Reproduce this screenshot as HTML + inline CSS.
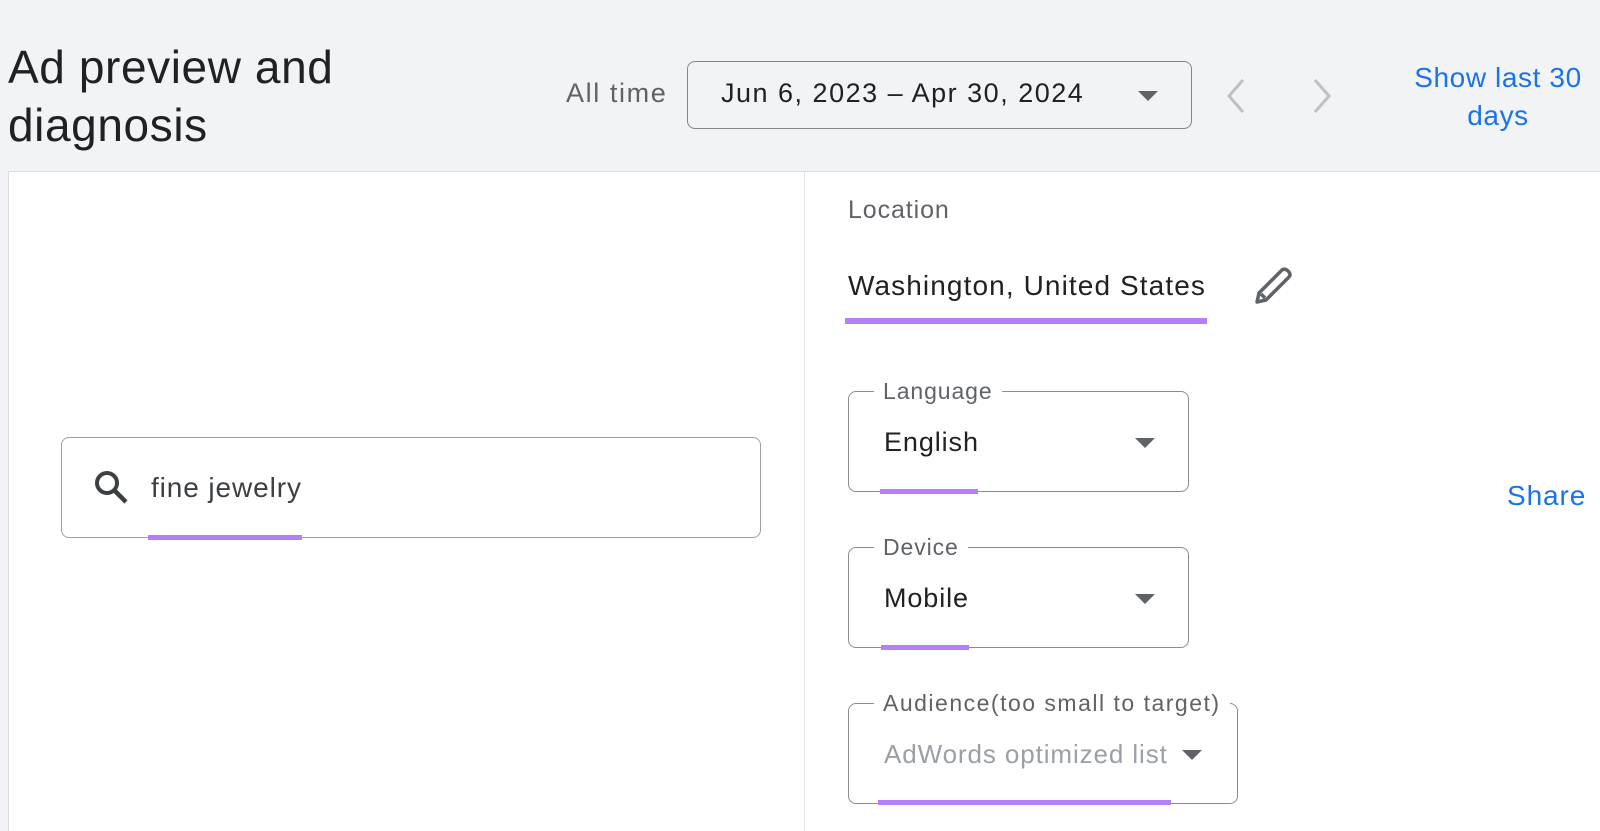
<!DOCTYPE html>
<html><head><meta charset="utf-8"><style>
*{margin:0;padding:0;box-sizing:border-box}
body{width:1600px;height:816px;background:#f1f3f4;font-family:"Liberation Sans",sans-serif;position:relative;overflow:hidden}
.a{position:absolute;white-space:nowrap;letter-spacing:0.9px}
.panel{position:absolute;left:8px;top:171px;width:1600px;height:660px;background:#fff;border-top:1px solid #dadce0;border-left:1px solid #dadce0}
.vdiv{position:absolute;left:804px;top:171px;width:1px;height:660px;background:#e3e3e3}
.box{position:absolute;border:1.5px solid #8a8d91;border-radius:8px}
.ul{position:absolute;height:5px;background:#b57ff7}
.lbl{position:absolute;background:#fff;padding:0 9px;font-size:23px;color:#5f6368;line-height:26px;letter-spacing:0.9px}
.caret{position:absolute;width:0;height:0;border-left:10px solid transparent;border-right:10px solid transparent;border-top:10px solid #5f6368}
</style></head><body>
<div class="a" style="left:8px;top:38px;font-size:46px;line-height:58px;color:#202124;letter-spacing:0.6px">Ad preview and<br>diagnosis</div>
<div class="a" style="left:566px;top:78px;font-size:27px;color:#5f6368;letter-spacing:1.6px">All time</div>
<div class="box" style="left:687px;top:61px;width:505px;height:68px;border-color:#80868b"></div>
<div class="a" style="left:721px;top:78px;font-size:27px;color:#202124;letter-spacing:1.5px">Jun 6, 2023 – Apr 30, 2024</div>
<div class="caret" style="left:1138px;top:91px"></div>
<svg class="a" style="left:1223px;top:77px" width="26" height="38"><path d="M20 3 L6 19 L20 35" stroke="#bdc1c6" stroke-width="3" fill="none"/></svg>
<svg class="a" style="left:1309px;top:77px" width="26" height="38"><path d="M6 3 L20 19 L6 35" stroke="#bdc1c6" stroke-width="3" fill="none"/></svg>
<div class="a" style="left:1398px;top:59px;width:200px;text-align:center;font-size:28px;line-height:38px;color:#1a73e8;letter-spacing:0.6px">Show last 30<br>days</div>
<div class="panel"></div>
<div class="vdiv"></div>
<div class="a" style="left:848px;top:196px;font-size:25px;color:#5f6368">Location</div>
<div class="a" style="left:848px;top:270px;font-size:28px;color:#202124;letter-spacing:1.1px">Washington, United States</div>
<div class="ul" style="left:845px;top:318px;width:362px;height:6px"></div>
<svg class="a" style="left:1252px;top:265px" width="42" height="42" viewBox="0 0 42 42"><path d="M5 37 L7 28 L30 5 Q33 3 36 6 L37 7 Q39 10 37 12 L14 35 Z M9 29 L13 33" stroke="#5f6368" stroke-width="3.5" fill="none" stroke-linejoin="round"/></svg>
<div class="box" style="left:848px;top:391px;width:341px;height:101px"></div>
<div class="lbl" style="left:874px;top:378px">Language</div>
<div class="a" style="left:884px;top:427px;font-size:27px;color:#202124">English</div>
<div class="caret" style="left:1135px;top:438px"></div>
<div class="ul" style="left:880px;top:489px;width:98px"></div>
<div class="box" style="left:848px;top:547px;width:341px;height:101px"></div>
<div class="lbl" style="left:874px;top:534px">Device</div>
<div class="a" style="left:884px;top:583px;font-size:27px;color:#202124">Mobile</div>
<div class="caret" style="left:1135px;top:594px"></div>
<div class="ul" style="left:881px;top:645px;width:88px"></div>
<div class="box" style="left:848px;top:703px;width:390px;height:101px"></div>
<div class="lbl" style="left:874px;top:690px;letter-spacing:1.5px">Audience(too small to target)</div>
<div class="a" style="left:884px;top:739px;font-size:26px;color:#9aa0a6">AdWords optimized list</div>
<div class="caret" style="left:1182px;top:750px"></div>
<div class="ul" style="left:878px;top:800px;width:293px"></div>
<div class="a" style="left:1507px;top:480px;font-size:28px;color:#1a73e8">Share</div>
<div class="box" style="left:61px;top:437px;width:700px;height:101px;border-color:#9aa0a6"></div>
<svg class="a" style="left:92px;top:468px" width="40" height="40" viewBox="0 0 40 40"><circle cx="15" cy="15" r="10" stroke="#3c4043" stroke-width="4" fill="none"/><path d="M22 22 L34 34" stroke="#3c4043" stroke-width="4.5"/></svg>
<div class="a" style="left:151px;top:472px;font-size:28px;color:#3c4043">fine jewelry</div>
<div class="ul" style="left:148px;top:535px;width:154px"></div>
</body></html>
